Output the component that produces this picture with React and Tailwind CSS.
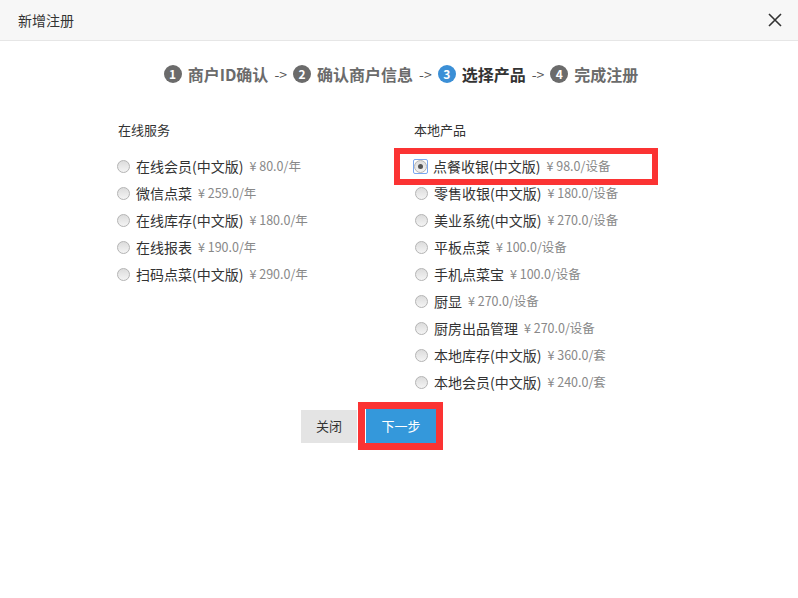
import React, { useState } from "react";

const online = [
  { name: "在线会员(中文版)", price: "¥ 80.0/年" },
  { name: "微信点菜", price: "¥ 259.0/年" },
  { name: "在线库存(中文版)", price: "¥ 180.0/年" },
  { name: "在线报表", price: "¥ 190.0/年" },
  { name: "扫码点菜(中文版)", price: "¥ 290.0/年" },
];

const local = [
  { name: "点餐收银(中文版)", price: "¥ 98.0/设备" },
  { name: "零售收银(中文版)", price: "¥ 180.0/设备" },
  { name: "美业系统(中文版)", price: "¥ 270.0/设备" },
  { name: "平板点菜", price: "¥ 100.0/设备" },
  { name: "手机点菜宝", price: "¥ 100.0/设备" },
  { name: "厨显", price: "¥ 270.0/设备" },
  { name: "厨房出品管理", price: "¥ 270.0/设备" },
  { name: "本地库存(中文版)", price: "¥ 360.0/套" },
  { name: "本地会员(中文版)", price: "¥ 240.0/套" },
];

const Radio = ({ checked }) => (
  <span
    className={
      "flex items-center justify-center w-[15px] h-[15px] " +
      (checked ? "border border-[#7aa7f0] rounded-[2px]" : "")
    }
  >
    <span className="flex items-center justify-center w-[13px] h-[13px] rounded-full border border-[#b4b4b4] bg-gradient-to-b from-[#dcdcdc] to-[#f4f4f4]">
      {checked && <span className="w-[5px] h-[5px] rounded-full bg-[#555]" />}
    </span>
  </span>
);

const Item = ({ item, checked, onPick }) => (
  <div className="flex items-center h-[27px] cursor-pointer" onClick={onPick}>
    <Radio checked={checked} />
    <span className="ml-[5px] text-[14px] text-[#333]">{item.name}</span>
    <span className="ml-[6px] text-[12.5px] text-[#888]">{item.price}</span>
  </div>
);

const Step = ({ n, label, active }) => (
  <div className="flex items-center">
    <span
      className={
        "flex items-center justify-center w-[18px] h-[18px] rounded-full text-white text-[12px] font-bold " +
        (active ? "bg-[#3b8fd6]" : "bg-[#6b6b6b]")
      }
    >
      {n}
    </span>
    <span
      className={
        "ml-[6px] text-[16px] font-bold " +
        (active ? "text-[#333]" : "text-[#6b6b6b]")
      }
    >
      {label}
    </span>
  </div>
);

const Arrow = () => (
  <span className="mx-[6px] text-[14px] text-[#555]">-&gt;</span>
);

const App = () => {
  const [picked, setPicked] = useState("点餐收银(中文版)");

  return (
    <div
      className="w-[798px] h-[598px] bg-white"
      style={{ fontFamily: '"Noto Sans CJK SC", "Liberation Sans", sans-serif' }}
    >
      <div className="flex items-center justify-between h-[41px] px-[18px] bg-[#f7f7f7] border-b border-[#e6e6e6]">
        <span className="text-[14px] text-[#333]">新增注册</span>
        <svg width="14" height="14" viewBox="0 0 14 14" className="mr-[-2px]">
          <path d="M1 1 L13 13 M13 1 L1 13" stroke="#333" strokeWidth="1.6" />
        </svg>
      </div>

      <div className="flex items-center justify-center h-[34px] mt-[16px] pl-[4px]">
        <Step n="1" label="商户ID确认" />
        <Arrow />
        <Step n="2" label="确认商户信息" />
        <Arrow />
        <Step n="3" label="选择产品" active />
        <Arrow />
        <Step n="4" label="完成注册" />
      </div>

      <div className="flex pl-[116px] mt-[27px]">
        <div className="w-[278px]">
          <div className="text-[13px] text-[#333] h-[24px] leading-[24px] mb-[11px] ml-[2px]">在线服务</div>
          {online.map((it) => (
            <Item
              key={it.name}
              item={it}
              checked={picked === it.name}
              onPick={() => setPicked(it.name)}
            />
          ))}
        </div>
        <div>
          <div className="text-[13px] text-[#333] h-[24px] leading-[24px] mb-[11px] ml-[20px]">本地产品</div>
          {local.map((it, i) =>
            i === 0 ? (
              <div
                key={it.name}
                className="border-[6px] border-[#fb3333] w-[264px] h-[37px] flex items-center pl-[13px] my-[-5px]"
              >
                <Item
                  item={it}
                  checked={picked === it.name}
                  onPick={() => setPicked(it.name)}
                />
              </div>
            ) : (
              <div key={it.name} className="pl-[20px]">
                <Item
                  item={it}
                  checked={picked === it.name}
                  onPick={() => setPicked(it.name)}
                />
              </div>
            )
          )}
        </div>
      </div>

      <div className="flex justify-start items-center mt-[6px] pl-[301px]">
        <button className="w-[56px] h-[33px] bg-[#e4e4e4] text-[13px] text-[#333]">关闭</button>
        <div className="ml-[1px] border-[7px] border-[#fb3333]">
          <button className="w-[71px] h-[34px] bg-[#3498db] text-[13px] text-white border-l border-white">
            下一步
          </button>
        </div>
      </div>
    </div>
  );
};

export default App;
